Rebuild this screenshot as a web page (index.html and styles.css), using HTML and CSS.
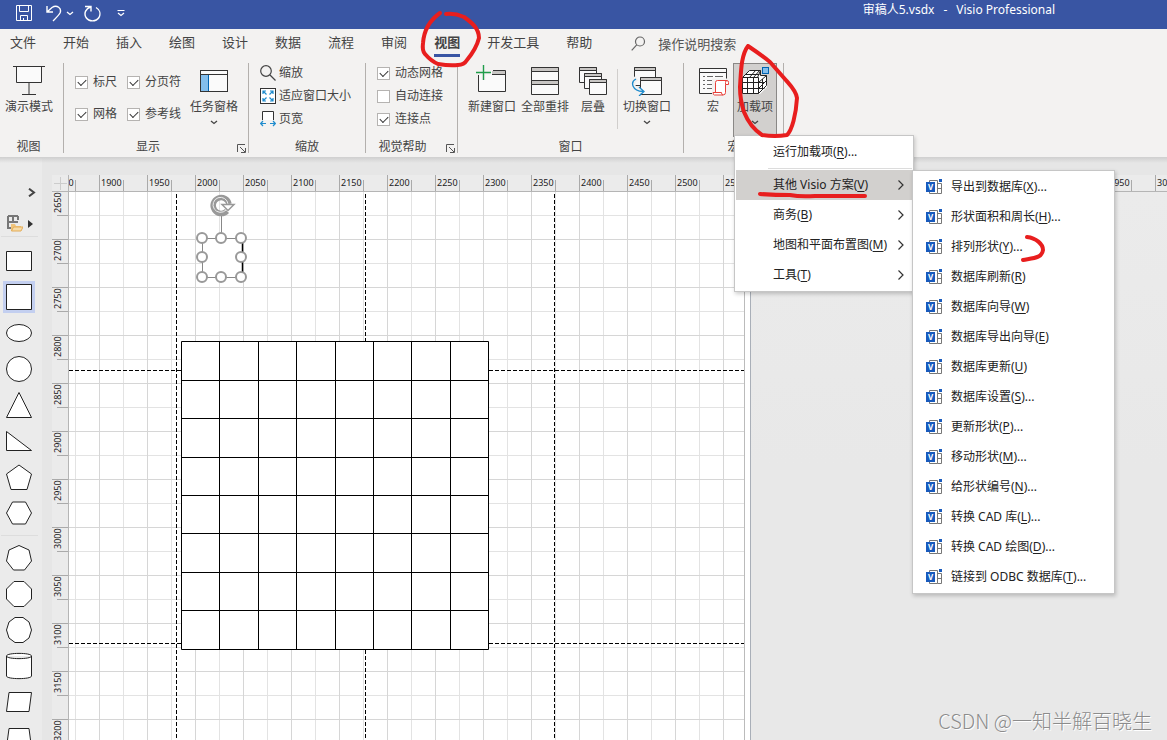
FILE: index.html
```html
<!DOCTYPE html>
<html lang="zh-CN">
<head>
<meta charset="utf-8">
<title>审稿人5.vsdx - Visio Professional</title>
<link rel="stylesheet" href="styles.css">
</head>
<body>
<svg class="defs" aria-hidden="true">
  <symbol id="visio" viewBox="0 0 16 16">
    <path d="M3.500 1.500h8v13h-8zM11.500 4.500h4v10h-4M11.500 9.500h4" fill="#fff" stroke="#777"/>
    <rect x="0" y="3" width="9" height="10" fill="#185abd"/>
    <text x="4.500" y="11" text-anchor="middle" class="visio-letter">V</text>
    <rect x="13" y="0" width="3" height="3" fill="#185abd"/>
  </symbol>
  <symbol id="arrow" viewBox="0 0 8 10"><path d="M1.500 .5L6 5 1.500 9.500" fill="none" stroke="#333" stroke-width="1.200"/></symbol>
  <symbol id="down" viewBox="0 0 8 5"><path d="M1 1l3 2.500L7 1" fill="none" stroke="currentColor" stroke-width="1.300"/></symbol>
  <symbol id="launch" viewBox="0 0 9 9"><path d="M.5 8V.5H8M3 3l5 5M8.500 4v4.500H4" fill="none" stroke="#555"/></symbol>
</svg>

<header class="titlebar">
  <div class="quick">
    <button class="save" aria-label="保存"><svg width="16" height="16" fill="none" stroke="#fff"><path d="M.5.5h15v15H.5zM3.500.5v6h9v-6M4.500 15.500v-5h7v5M7.500 15v-2"/></svg></button>
    <button class="undo" aria-label="撤消"><svg width="16" height="17" fill="none" stroke="#fff" stroke-width="1.400"><path d="M1 1v6h6M1 7l5-4.500c5-3.500 10 1 8 5.500-1 2-4 5-7 8"/></svg></button>
    <button class="more" aria-label="撤消选项"><svg width="8" height="5"><use href="#down"/></svg></button>
    <button class="redo" aria-label="重复"><svg width="17" height="17" fill="none" stroke="#fff" stroke-width="1.400"><path d="M1 1.500h6v5M6.500 2C2 3.500-.5 8 2 12.500c3 4.500 10 4.500 13 0 2-4 .5-8-3-10"/></svg></button>
    <button class="custom" aria-label="自定义快速访问工具栏"><svg width="8" height="8" fill="none" stroke="#fff"><path d="M.5 1.500h7M1 4l3 2.500L7 4" stroke-width="1.200"/></svg></button>
  </div>
  <h1 class="doc-title"><span>审稿人5.vsdx</span><span>-</span><span>Visio Professional</span></h1>
</header>

<nav class="tabs">
  <button>文件</button><button>开始</button><button>插入</button><button>绘图</button><button>设计</button><button>数据</button><button>流程</button><button>审阅</button><button class="active">视图</button><button>开发工具</button><button>帮助</button>
  <label class="search"><svg width="15" height="15" fill="none" stroke="#666" stroke-width="1.200" aria-hidden="true"><circle cx="9" cy="5.500" r="4.500"/><path d="M5.700 8.800L.7 14.300"/></svg><input type="text" placeholder="操作说明搜索" aria-label="操作说明搜索"></label>
</nav>

<div class="ribbon">
  <section class="group g-view">
    <div class="tools">
      <button class="big"><svg width="32" height="32" fill="none" stroke="#333"><path d="M3.500 3v15.500h25V3" fill="#fafafa"/><path d="M0 2.500h32M16 19v11M9 30.500h14"/></svg><span>演示模式</span></button>
    </div>
    <h2>视图</h2>
  </section>
  <section class="group g-show">
    <div class="tools">
      <div class="checks two">
        <label><input type="checkbox" checked>标尺</label><label><input type="checkbox" checked>分页符</label>
        <label><input type="checkbox" checked>网格</label><label><input type="checkbox" checked>参考线</label>
      </div>
      <button class="big"><svg width="32" height="32"><rect x="2.500" y="6.500" width="27" height="21" fill="#fafafa" stroke="#333"/><rect x="3" y="11" width="8" height="16" fill="#83beec"/><path d="M3 10.500h26" stroke="#333"/><path d="M10.500 11v16" stroke="#0063b1"/></svg><span>任务窗格</span><svg class="chev" width="8" height="5"><use href="#down"/></svg></button>
    </div>
    <h2>显示</h2>
    <button class="launcher" aria-label="显示设置"><svg width="9" height="9"><use href="#launch"/></svg></button>
  </section>
  <section class="group g-zoom">
    <div class="tools rows">
      <button class="small"><svg width="16" height="16" fill="none" stroke="#444" stroke-width="1.200"><circle cx="6" cy="6" r="5.300"/><path d="M10 10l5.500 5.500"/></svg>缩放</button>
      <button class="small"><svg width="16" height="16" fill="none"><rect x=".5" y=".5" width="15" height="15" fill="#fff" stroke="#333"/><path d="M3 6V3h3M10 3h3v3M13 10v3h-3M6 13H3v-3M3 3l3.500 3.500M13 3L9.500 6.500M13 13L9.500 9.500M3 13l3.500-3.500" stroke="#1e8bcd" stroke-width="1.200"/></svg>适应窗口大小</button>
      <button class="small"><svg width="16" height="16" fill="none"><path d="M2.500 9V.5h11V9" fill="#fff" stroke="#333"/><path d="M.5 12.500H6M10 12.500h5.500M3 10L.7 12.500 3 15M13 10l2.300 2.500L13 15" stroke="#1e8bcd" stroke-width="1.200"/></svg>页宽</button>
    </div>
    <h2>缩放</h2>
  </section>
  <section class="group g-aids">
    <div class="tools rows">
      <label><input type="checkbox" checked>动态网格</label>
      <label><input type="checkbox">自动连接</label>
      <label><input type="checkbox" checked>连接点</label>
    </div>
    <h2>视觉帮助</h2>
    <button class="launcher" aria-label="视觉帮助设置"><svg width="9" height="9"><use href="#launch"/></svg></button>
  </section>
  <section class="group g-window">
    <div class="tools">
      <button class="big"><svg width="32" height="32" fill="none"><path d="M2.500 11v16.500h27v-21H17" fill="#fafafa" stroke="#333"/><path d="M16 7h13v3H16z" fill="#c8c6c4"/><path d="M16 10.500h13" stroke="#333"/><path d="M7.500 1v15M0 8.500h15" stroke="#f3f2f1" stroke-width="4"/><path d="M7.500 1v15M0 8.500h15" stroke="#1f9d4a" stroke-width="1.400"/></svg><span>新建窗口</span></button>
      <button class="big"><svg width="32" height="32" stroke="#333"><path d="M2.500 3.500h27v27h-27z" fill="#fafafa"/><path d="M2.500 3.500h27v4h-27zM2.500 16.500h27v4h-27z" fill="#c8c6c4"/></svg><span>全部重排</span></button>
      <button class="big narrow"><svg width="32" height="32" stroke="#333"><path d="M2.500 3.500h17v15h-17z" fill="#fafafa"/><path d="M2.500 3.500h17v3h-17z" fill="#c8c6c4"/><path d="M7.500 9.500h17v15h-17z" fill="#fafafa"/><path d="M7.500 9.500h17v3h-17z" fill="#c8c6c4"/><path d="M12.500 15.500h17v15h-17z" fill="#fafafa"/><path d="M12.500 15.500h17v3h-17z" fill="#c8c6c4"/></svg><span>层叠</span></button>
      <i class="rule"></i>
      <button class="big"><svg width="32" height="32" stroke="#333"><path d="M3.500 3.500h21v18h-21z" fill="#fafafa"/><path d="M3.500 3.500h21v3h-21z" fill="#c8c6c4"/><path d="M9.500 13.500h21v17h-21z" fill="#fafafa"/><path d="M9.500 13.500h21v3h-21z" fill="#c8c6c4"/><path d="M6 14C-1 18 1 27 11 27.500" fill="none" stroke="#f3f2f1" stroke-width="5"/><path d="M5 15C-1 18 1 27 12 27.500M8 23l5 4.500-5 4.500" fill="none" stroke="#1e8bcd" stroke-width="1.300"/></svg><span>切换窗口</span><svg class="chev" width="8" height="5"><use href="#down"/></svg></button>
    </div>
    <h2>窗口</h2>
  </section>
  <section class="group g-macro">
    <div class="tools">
      <button class="big"><svg width="32" height="32" fill="none" stroke="#333"><path d="M2.500 4.500h27v25h-27z" fill="#fafafa"/><path d="M2.500 8.500h27"/><path d="M6 12.500h2M10 12.500h6M18 12.500h8M6 16.500h2M10 16.500h6M6 20.500h2M10 20.500h6M6 24.500h2M10 24.500h5" stroke="#666"/><path d="M15 14.500h17V32H15z" fill="#f3f2f1" stroke="none"/><path d="M18.500 28.500v-10q0-2 2-2H30q1.500 0 1.500 2v2h-3v8q0 2.500-2.500 2.500h-8.500q-1.500 0-1.500-2.500h8.500q0 2.500 1.500 2.500M28.500 20.500v-2q0-2 1.500-2" fill="#fff" stroke="#e8403a"/></svg><span>宏</span></button>
      <button class="big pressed" aria-expanded="true"><svg width="32" height="32" fill="none"><path d="M3 14l8-8h11v6h6v11l-7 7H3z" fill="#fff"/><path d="M3.500 13.500h16v16h-16zM3.500 13.500l7-7h11l-3 7M8.500 13.500v16M14.500 13.500v16M3.500 18.500h22M3.500 24.500h22M6.500 10.500h14M10.500 13.500l6-7M19.500 29.500l8-8v-10l-8 7M19.500 24.500l8-8M23.500 15v11M14.500 13.500l6-7M21.500 6.500v5h6" stroke="#222"/><rect x="22" y="2" width="9" height="9" fill="#d2d0ce"/><rect x="23.500" y="3.500" width="6" height="6" fill="#83beec" stroke="#0063b1"/></svg><span>加载项</span><svg class="chev" width="8" height="5"><use href="#down"/></svg></button>
    </div>
    <h2>宏</h2>
  </section>
</div>

<main class="workspace">
  <aside class="stencil">
    <button class="expand" aria-label="展开形状窗口"><svg width="8" height="9"><path d="M1 .7l5 3.800-5 3.800" fill="none" stroke="#444" stroke-width="2"/></svg></button>
    <button class="set" aria-label="更多形状"><svg width="16" height="17" fill="none"><path d="M1 1h10M1 1v12h4M1 7h10M6 1v6M11 1v4" stroke="#777" stroke-width="2"/><path d="M4 16V9h4l1 2h5v5z" fill="#f0c47c"/><path d="M4.500 16l2-4H16l-2 4z" fill="#f7dba6" stroke="#e3ac58"/></svg><svg width="5" height="8"><path d="M0 0l5 4-5 4z" fill="#333"/></svg></button>
    <div class="shapes">
      <button aria-label="矩形"><svg><path d="M1.500 4.500h25v19h-25z"/></svg></button>
      <button class="chosen" aria-label="正方形"><svg><path d="M1.500 1.500h25v25h-25z"/></svg></button>
      <button aria-label="椭圆"><svg><ellipse cx="14" cy="14" rx="12.500" ry="8.500"/></svg></button>
      <button aria-label="圆形"><svg><circle cx="14" cy="14" r="12.500"/></svg></button>
      <button aria-label="三角形"><svg><path d="M14 1.500l12.500 25h-25z"/></svg></button>
      <button aria-label="直角三角形"><svg><path d="M1.500 4.500v19h25z"/></svg></button>
      <button aria-label="五边形"><svg><path d="M14 2l12.500 9-4.500 15.500H6L1.500 11z"/></svg></button>
      <button aria-label="六边形"><svg><path d="M7.500 3h13l6 11-6 11h-13l-6-11z"/></svg></button>
    </div>
    <div class="shapes second">
      <button aria-label="七边形"><svg><path d="M14 1.500l10 4.500 2.500 11-7 9h-11l-7-9L4 6z"/></svg></button>
      <button aria-label="八边形"><svg><path d="M9 1.500h10L26.500 9v10L19 26.500H9L1.500 19V9z"/></svg></button>
      <button aria-label="十边形"><svg><path d="M10 1.500h8l6 4.500 2.500 8-2.500 8-6 4.500h-8L4 22l-2.500-8L4 6z"/></svg></button>
      <button aria-label="圆柱形"><svg><path d="M1.500 4c0-3.500 25-3.500 25 0v20c0 3.500-25 3.500-25 0zM1.500 4c0 3.500 25 3.500 25 0"/></svg></button>
      <button aria-label="平行四边形"><svg><path d="M4 4.500h22.500l-2.500 19H1.500z"/></svg></button>
      <button aria-label="梯形"><svg><path d="M4 4.500h20l2.500 19h-25z"/></svg></button>
    </div>
  </aside>

  <div class="drawing">
    <div class="corner"></div>
    <div class="ruler-x"><div class="scale"><span>1850</span><span>1900</span><span>1950</span><span>2000</span><span>2050</span><span>2100</span><span>2150</span><span>2200</span><span>2250</span><span>2300</span><span>2350</span><span>2400</span><span>2450</span><span>2500</span><span>2550</span><span>2600</span><span>2650</span><span>2700</span><span>2750</span><span>2800</span><span>2850</span><span>2900</span><span>2950</span><span>3000</span></div></div>
    <div class="ruler-y"><div class="scale"><span>2650</span><span>2700</span><span>2750</span><span>2800</span><span>2850</span><span>2900</span><span>2950</span><span>3000</span><span>3050</span><span>3100</span><span>3150</span><span>3200</span></div></div>
    <div class="canvas">
      <div class="page"></div>
      <svg class="art" aria-hidden="true"><g transform="translate(-69 -192)" fill="none">
        <path d="M176.500 194v600M365.500 194v600M554.500 194v600M69 370.500h675M69 643.500h675" stroke="#000" stroke-dasharray="4 2"/>
        <path d="M181.500 341.500h307v308h-307z" fill="#fff" stroke="#000"/>
        <path d="M219.500 341v308M258.500 341v308M296.500 341v308M335.500 341v308M373.500 341v308M411.500 341v308M450.500 341v308M181 380.500h308M181 418.500h308M181 457.500h308M181 495.500h308M181 533.500h308M181 572.500h308M181 610.500h308" stroke="#000"/>
        <path d="M202 238h39v39h-39z" fill="#fff"/>
        <path d="M242.500 238v39" stroke="#000" stroke-width="1.500"/>
        <path d="M202.500 238.500h39M202.500 277.500h39M202.500 238v39M221.500 214v24" stroke="#888"/>
        <g fill="#fff" stroke="#999" stroke-width="2"><circle cx="202" cy="238" r="5"/><circle cx="221" cy="238" r="5"/><circle cx="241" cy="238" r="5"/><circle cx="202" cy="257" r="5"/><circle cx="241" cy="257" r="5"/><circle cx="202" cy="277" r="5"/><circle cx="221" cy="277" r="5"/><circle cx="241" cy="277" r="5"/></g>
        <path d="M229 204A8 8 0 1 0 227 211" stroke="#999" stroke-width="5.500"/>
        <path d="M228 204A7.500 7.500 0 1 0 226 210" stroke="#eee" stroke-width="1"/>
        <path d="M222 204.500h12l-6 6z" fill="#fff" stroke="#999" stroke-width="1.500"/>
      </g></svg>
    </div>
  </div>
</main>

<div class="menu addins" role="menu">
  <button><span>运行加载项(<u>R</u>)...</span></button>
  <hr>
  <button class="hover"><span>其他 Visio 方案(<u>V</u>)</span><svg width="8" height="10"><use href="#arrow"/></svg></button>
  <button><span>商务(<u>B</u>)</span><svg width="8" height="10"><use href="#arrow"/></svg></button>
  <button><span>地图和平面布置图(<u>M</u>)</span><svg width="8" height="10"><use href="#arrow"/></svg></button>
  <button><span>工具(<u>T</u>)</span><svg width="8" height="10"><use href="#arrow"/></svg></button>
</div>

<div class="menu solutions" role="menu">
  <button><svg width="16" height="16"><use href="#visio"/></svg><span>导出到数据库(<u>X</u>)...</span></button>
  <button><svg width="16" height="16"><use href="#visio"/></svg><span>形状面积和周长(<u>H</u>)...</span></button>
  <button><svg width="16" height="16"><use href="#visio"/></svg><span>排列形状(<u>Y</u>)...</span></button>
  <button><svg width="16" height="16"><use href="#visio"/></svg><span>数据库刷新(<u>R</u>)</span></button>
  <button><svg width="16" height="16"><use href="#visio"/></svg><span>数据库向导(<u>W</u>)</span></button>
  <button><svg width="16" height="16"><use href="#visio"/></svg><span>数据库导出向导(<u>E</u>)</span></button>
  <button><svg width="16" height="16"><use href="#visio"/></svg><span>数据库更新(<u>U</u>)</span></button>
  <button><svg width="16" height="16"><use href="#visio"/></svg><span>数据库设置(<u>S</u>)...</span></button>
  <button><svg width="16" height="16"><use href="#visio"/></svg><span>更新形状(<u>P</u>)...</span></button>
  <button><svg width="16" height="16"><use href="#visio"/></svg><span>移动形状(<u>M</u>)...</span></button>
  <button><svg width="16" height="16"><use href="#visio"/></svg><span>给形状编号(<u>N</u>)...</span></button>
  <button><svg width="16" height="16"><use href="#visio"/></svg><span>转换 CAD 库(<u>L</u>)...</span></button>
  <button><svg width="16" height="16"><use href="#visio"/></svg><span>转换 CAD 绘图(<u>D</u>)...</span></button>
  <button><svg width="16" height="16"><use href="#visio"/></svg><span>链接到 ODBC 数据库(<u>T</u>)...</span></button>
</div>

<svg class="marks" aria-hidden="true">
  <path d="M440 13C430 20 424 30 423 43Q422 51 425 54Q431 61 438 64Q450 66 458 65Q464 65 467 60C472 54 477 46 479 38C479 28 471 22 464 17Q455 13 446 14"/>
  <path d="M748 46C741 55 741 72 740 87Q740 100 744 112Q750 127 762 135Q775 137 787 135C792 130 796 115 797 98C796 90 789 84 784 78L770 62Q760 54 748 46"/>
  <path d="M760 194Q775 195 790 195Q800 197 815 196H865"/>
  <path d="M1027 237C1036 238 1043 244 1043 250C1042 258 1034 258 1023 260"/>
</svg>
<p class="watermark">CSDN @一知半解百晓生</p>
</body>
</html>
```
FILE: styles.css
```css
* { box-sizing: border-box; }
body {
  margin: 0;
  height: 100vh;
  overflow: hidden;
  position: relative;
  display: flex;
  flex-direction: column;
  background: #e6e6e6;
  color: #444;
  font: 12px/18px "Noto Sans", "Noto Sans CJK SC", sans-serif;
}
button {
  margin: 0;
  padding: 0;
  border: 0;
  background: none;
  color: inherit;
  font: inherit;
  white-space: nowrap;
}
h1, h2, p { margin: 0; font-size: 12px; font-weight: 400; }
svg { display: block; flex: none; }
.defs { position: absolute; width: 0; height: 0; }
.visio-letter { font: 700 8px "Noto Sans", sans-serif; fill: #fff; }

.titlebar {
  flex: none;
  height: 29px;
  display: flex;
  justify-content: space-between;
  padding: 0 112px 0 16px;
  background: #3955a3;
  color: #fff;
}
.quick { display: flex; align-items: center; height: 26px; }
.undo { margin-left: 14px; }
.more { margin-left: 4px; }
.redo { margin-left: 10px; }
.custom { margin-left: 16px; }
.doc-title { display: flex; gap: 9px; line-height: 20px; }

.tabs {
  flex: none;
  height: 30px;
  display: flex;
  gap: 27px;
  padding: 0 10px;
  background: #f3f2f1;
  font-size: 13px;
}
.tabs button { height: 28px; border-bottom: 3px solid transparent; }
.tabs .active { font-weight: 700; border-color: #3955a3; }
.search { display: flex; align-items: center; gap: 12px; margin-left: 12px; height: 29px; }
.search input { border: 0; padding: 0; width: 120px; background: none; font: inherit; }
.search input::placeholder { color: #555; opacity: 1; }

.ribbon {
  flex: none;
  height: 98px;
  display: flex;
  padding: 4px 0;
  background: #f3f2f1;
}
.group {
  position: relative;
  display: flex;
  flex-direction: column;
  justify-content: space-between;
  border-right: 1px solid #b3b0ad;
}
.group h2 { line-height: 12px; text-align: center; }
.tools { display: flex; padding-top: 1px; }
.g-view { width: 64px; }
.g-show { width: 185px; }
.g-zoom { width: 117px; }
.g-aids { width: 92px; }
.g-window { width: 226px; }
.g-macro { width: 100px; }
.g-view .tools { padding-left: 5px; }
.g-show .tools { padding-left: 11px; padding-right: 10px; justify-content: space-between; }
.g-zoom .tools, .g-aids .tools { padding-left: 11px; }
.g-window .tools { padding-left: 10px; gap: 5px; }
.g-macro .tools { padding-left: 11px; padding-right: 7px; justify-content: space-between; }
.g-view h2 { padding-right: 6px; }
.g-show h2 { padding-right: 16px; }
.g-aids h2 { padding-right: 18px; }

.big {
  width: 48px;
  height: 72px;
  display: flex;
  flex-direction: column;
  align-items: center;
}
.big span { line-height: 18px; margin-top: 2px; }
.chev { margin-top: 4px; }
.narrow { width: 38px; }
.rule { width: 1px; height: 60px; margin-top: 5px; background: #d0cecc; }
.g-macro .big { width: 36px; }
.g-macro .pressed { width: 42px; background: #d2d0ce; outline: 1px solid #8a8886; }
.rows { flex-direction: column; align-items: flex-start; gap: 5px; }
.small, .tools label { display: flex; align-items: center; height: 18px; }
.small { gap: 3px; }
.tools label { gap: 5px; white-space: nowrap; }
.two { display: grid; grid-template-columns: 52px 54px; row-gap: 14px; align-content: start; padding-top: 9px; }
input[type="checkbox"] {
  appearance: none;
  position: relative;
  width: 13px;
  height: 13px;
  margin: 0;
  border: 1px solid #b5b3b1;
  background: #fff;
}
input[type="checkbox"]:checked::after {
  content: "";
  position: absolute;
  left: 2px;
  top: 2px;
  width: 7px;
  height: 4px;
  border: solid #333;
  border-width: 0 0 1px 1px;
  transform: rotate(-45deg);
}
.launcher { position: absolute; right: 2px; bottom: 0; }

.workspace {
  flex: 1;
  min-height: 0;
  display: flex;
  background: linear-gradient(#cfcfcf, #e6e6e6 6px);
}
.stencil { flex: none; width: 42px; padding-top: 31px; overflow: hidden; background: linear-gradient(#cfcfcf, #ebebeb 6px); }
.expand { display: block; margin-left: 28px; }
.set { display: flex; align-items: center; gap: 5px; margin: 18px 0 4px 7px; }
.shapes { display: flex; flex-direction: column; width: 37px; margin-left: 1px; padding-top: 6px; border-top: 1px solid #ddd; }
.second { margin-top: 4px; padding-top: 4px; }
.shapes button { width: 36px; height: 36px; display: grid; place-items: center; }
.shapes svg { width: 28px; height: 28px; fill: #fff; stroke: #222; stroke-width: 1; }
.chosen { background: linear-gradient(#c3cff0, #c3cff0) center / 32px 32px no-repeat; }

.drawing {
  flex: 1;
  min-width: 0;
  margin: 18px 0 0 10px;
  display: grid;
  grid-template: 17px 1fr / 17px 1fr;
}
.corner {
  border: solid #b5b5b5;
  border-width: 0 1px 1px 0;
  background:
    linear-gradient(#ccc, #ccc) center / 13px 1px no-repeat,
    linear-gradient(#ccc, #ccc) center / 1px 13px no-repeat,
    #ebebeb;
}
.ruler-x, .ruler-y { overflow: hidden; background: #ebebeb; color: #222; font-size: 9px; }
.ruler-x { border-bottom: 1px solid #b5b5b5; }
.ruler-y { border-right: 1px solid #b5b5b5; min-height: 0; }
.ruler-x .scale { display: flex; height: 16px; margin-left: -18px; }
.ruler-x span {
  flex: none;
  width: 48px;
  padding-left: 1px;
  line-height: 15px;
  border-left: 1px solid #aaa;
  background: linear-gradient(#aaa, #aaa) 23px 100% / 1px 11px no-repeat;
}
.ruler-y .scale { display: flex; flex-direction: column; margin-top: -1px; }
.ruler-y span {
  flex: none;
  width: 16px;
  height: 48px;
  padding-left: 4px;
  line-height: 12px;
  writing-mode: vertical-rl;
  transform: rotate(180deg);
  text-align: right;
  border-bottom: 1px solid #aaa;
  background: linear-gradient(#aaa, #aaa) 0 23px / 11px 1px no-repeat;
}
.canvas {
  position: relative;
  overflow: hidden;
  min-height: 0;
  background: linear-gradient(#ebebeb, #e8e8e8 50%);
}
.page {
  width: 682px;
  height: 100%;
  border-right: 1px solid #a9afb8;
  background:
    linear-gradient(#fff, #fff) 676px 0 / 5px 100% no-repeat,
    linear-gradient(#bbb, #bbb) 675px 0 / 1px 100% no-repeat,
    linear-gradient(90deg, #d6d6d6 1px, transparent 1px) 30px 0 / 48px 48px,
    linear-gradient(#d6d6d6 1px, transparent 1px) 0 47px / 48px 48px,
    linear-gradient(90deg, #e3e3e3 1px, transparent 1px) 6px 0 / 48px 48px,
    linear-gradient(#e3e3e3 1px, transparent 1px) 0 23px / 48px 48px,
    #fff;
}
.art { position: absolute; left: 0; top: 0; width: 100%; height: 100%; }

.menu {
  position: absolute;
  display: flex;
  flex-direction: column;
  border: 1px solid #c6c6c6;
  background: #fff;
  color: #222;
  box-shadow: 1px 2px 4px rgba(0, 0, 0, .2);
}
.menu button { display: flex; align-items: center; height: 30px; text-align: left; }
.menu u { text-underline-offset: 2px; }
.addins { left: 734px; top: 135px; width: 180px; padding: 1px; }
.addins button { justify-content: space-between; padding: 0 7px 0 37px; }
.addins hr { width: 144px; height: 1px; margin: 1px 0 1px auto; border: 0; background: #dcdcdc; }
.addins .hover { background: #d2d0ce; }
.solutions { left: 912px; top: 170px; width: 203px; padding: 1px 13px; }
.solutions button { gap: 9px; }

.marks {
  position: absolute;
  left: 0;
  top: 0;
  width: 100%;
  height: 100%;
  pointer-events: none;
  fill: none;
  stroke: #e81e1e;
  stroke-width: 4;
  stroke-linecap: round;
  stroke-linejoin: round;
}
.watermark {
  position: absolute;
  right: 15px;
  bottom: 5px;
  color: #8c8c8c;
  font: 300 20px/28px "Noto Sans CJK SC", sans-serif;
  text-shadow: 1px 1px 0 #fff;
}
```
